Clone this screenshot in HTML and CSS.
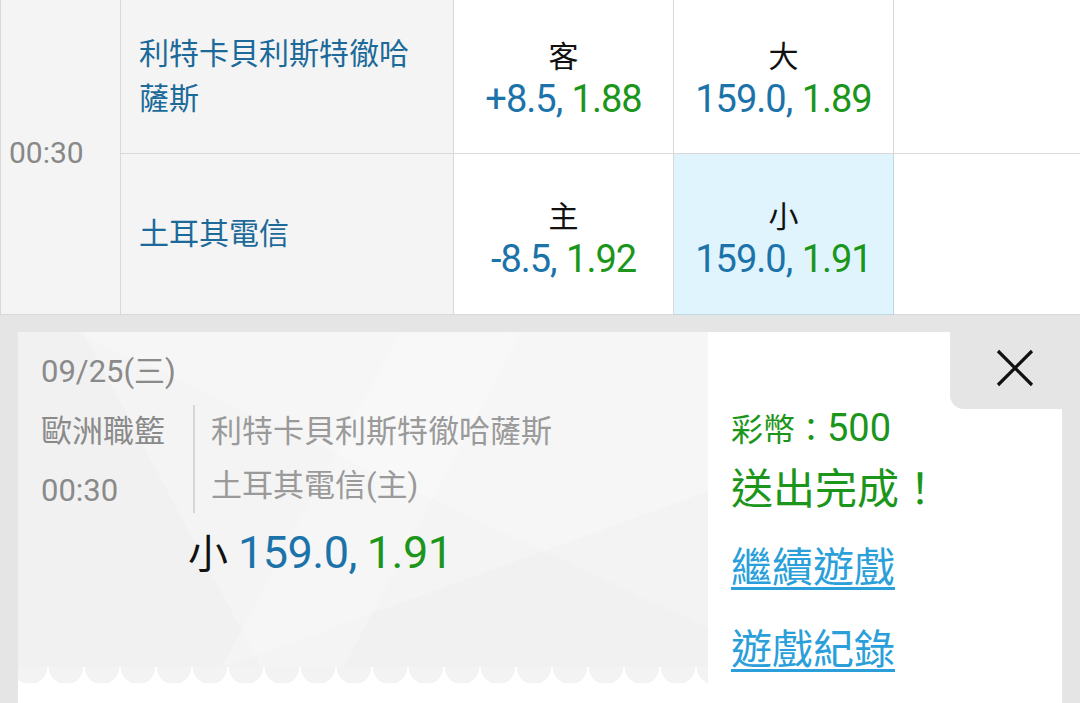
FILE: index.html
```html
<!DOCTYPE html>
<html lang="zh-Hant">
<head>
    <meta charset="UTF-8">
    <meta name="viewport" content="width=device-width, initial-scale=1.0">
    <title>投注單</title>
    <link rel="stylesheet" href="styles.css">
</head>
<body>
    <table class="odds">
        <colgroup>
            <col class="col-time">
            <col class="col-team">
            <col class="col-odd">
            <col class="col-odd">
            <col>
        </colgroup>
        <tr class="row-away">
            <td class="time" rowspan="2">00:30</td>
            <td class="team">利特卡貝利斯特徹哈<br>薩斯</td>
            <td class="odd">
                <div class="side">客</div>
                <div class="nums"><span class="line">+8.5,</span> <span class="price">1.88</span></div>
            </td>
            <td class="odd">
                <div class="side">大</div>
                <div class="nums"><span class="line">159.0,</span> <span class="price">1.89</span></div>
            </td>
            <td class="blank"></td>
        </tr>
        <tr class="row-home">
            <td class="team">土耳其電信</td>
            <td class="odd">
                <div class="side">主</div>
                <div class="nums"><span class="line">-8.5,</span> <span class="price">1.92</span></div>
            </td>
            <td class="odd selected">
                <div class="side">小</div>
                <div class="nums"><span class="line">159.0,</span> <span class="price">1.91</span></div>
            </td>
            <td class="blank"></td>
        </tr>
    </table>

    <div class="panel">
        <div class="ticket">
            <div class="ticket-body">
                <div class="date">09/25(三)</div>
                <div class="match">
                    <div class="league">
                        <div>歐洲職籃</div>
                        <div>00:30</div>
                    </div>
                    <div class="teams">
                        <div>利特卡貝利斯特徹哈薩斯</div>
                        <div>土耳其電信(主)</div>
                    </div>
                </div>
                <div class="pick"><span class="side">小</span> <span class="line">159.0,</span> <span class="price">1.91</span></div>
            </div>
            <div class="ticket-edge"></div>
        </div>

        <div class="result">
            <div class="coins">彩幣：<span class="amount">500</span></div>
            <div class="done">送出完成！</div>
            <a class="link" href="#">繼續遊戲</a>
            <a class="link" href="#">遊戲紀錄</a>
        </div>

        <button class="close" aria-label="關閉">
            <svg width="38" height="38" viewBox="0 0 38 38">
                <path d="M2 2 L36 36 M36 2 L2 36" stroke="#111" stroke-width="3.2" fill="none"/>
            </svg>
        </button>
    </div>
</body>
</html>
```

FILE: styles.css
```css
html, body {
    overflow: hidden;
}
body {
    margin: 0;
    padding: 0;
    background-color: #e5e5e5;
    font-family: 'Roboto', 'Noto Sans CJK TC', sans-serif;
    color: #222;
}

/* odds table */
.odds {
    width: 1080px;
    border-collapse: collapse;
    table-layout: fixed;
    background-color: #fff;
}
.col-time {
    width: 120px;
}
.col-team {
    width: 333px;
}
.col-odd {
    width: 220px;
}
.odds td {
    border: 1px solid #d9d9d9;
    border-top: none;
    padding: 0;
    vertical-align: middle;
}
.odds td:last-child {
    border-right: none;
}
.row-away {
    height: 153px;
}
.row-home {
    height: 161px;
}
.time {
    background-color: #f4f4f4;
    color: #888;
    font-size: 30px;
    padding: 0 0 8px 8px !important;
}
.team {
    background-color: #f4f4f4;
    color: #1b6a99;
    font-size: 30px;
    line-height: 45px;
    padding-left: 18px !important;
}
.odd {
    text-align: center;
    padding-top: 4px !important;
}
.row-home .odd {
    padding-top: 10px !important;
}
.odd .side {
    font-size: 30px;
    line-height: 41px;
    color: #111;
}
.nums {
    font-size: 38px;
    line-height: 44px;
}
.line, .price {
    font-size: 38px;
    letter-spacing: -1px;
}
.line {
    color: #1b73a9;
}
.price {
    color: #1b961b;
}
.odds .selected {
    background-color: #e0f4fd;
    border-color: #bcd6e4;
}

/* bet slip */
.panel {
    position: relative;
    display: grid;
    grid-template-columns: 690px 1fr;
    margin: 17px 18px 0 18px;
    height: 371px;
    background-color: #fff;
}
.ticket {
    display: flex;
    flex-direction: column;
}
.ticket-body {
    height: 325px;
    padding: 10px 0 0 23px;
    color: #8a8a8a;
    font-size: 31px;
    background:
        linear-gradient(118deg, transparent 44%, rgba(255, 255, 255, 0.22) 44%, rgba(255, 255, 255, 0.22) 58%, transparent 58%),
        linear-gradient(62deg, rgba(0, 0, 0, 0.01) 28%, transparent 28%),
        linear-gradient(160deg, transparent 70%, rgba(0, 0, 0, 0.012) 70%),
        linear-gradient(25deg, transparent 55%, rgba(255, 255, 255, 0.2) 55%),
        #f4f4f4;
}
.ticket-edge {
    height: 16px;
    background: radial-gradient(circle at 18px 0, #f3f3f3 17px, #fff 17.5px);
    background-size: 36px 16px;
    background-position: -6px 0;
}
.date {
    line-height: 60px;
}
.match {
    display: flex;
}
.league {
    width: 152px;
    line-height: 59px;
}
.teams {
    margin-top: 3px;
    height: 108px;
    padding-left: 16px;
    border-left: 2px solid #d6d6d6;
    line-height: 54px;
    color: #9a9a9a;
}
.pick {
    margin: 3px 0 0 147px;
    font-size: 40px;
    line-height: 60px;
}
.pick .side {
    font-size: 40px;
    color: #111;
}
.pick .line, .pick .price {
    font-size: 45px;
    letter-spacing: -0.5px;
}

.result {
    padding: 72px 0 0 23px;
    color: #1b961b;
}
.coins {
    font-size: 32px;
    line-height: 48px;
}
.amount {
    font-size: 38px;
}
.done {
    font-size: 42px;
    line-height: 72px;
}
.link {
    display: block;
    width: max-content;
    font-size: 41px;
    line-height: 60px;
    color: #2a9fda;
    text-decoration: underline;
    text-decoration-thickness: 3px;
    text-underline-offset: 5px;
    margin-top: 12px;
}
.link + .link {
    margin-top: 22px;
}
.close {
    position: absolute;
    top: 0;
    right: -18px;
    width: 130px;
    height: 77px;
    padding: 0 0 4px 0;
    border: none;
    background-color: #e5e5e5;
    border-bottom-left-radius: 14px;
    display: flex;
    align-items: center;
    justify-content: center;
    cursor: pointer;
}
```
